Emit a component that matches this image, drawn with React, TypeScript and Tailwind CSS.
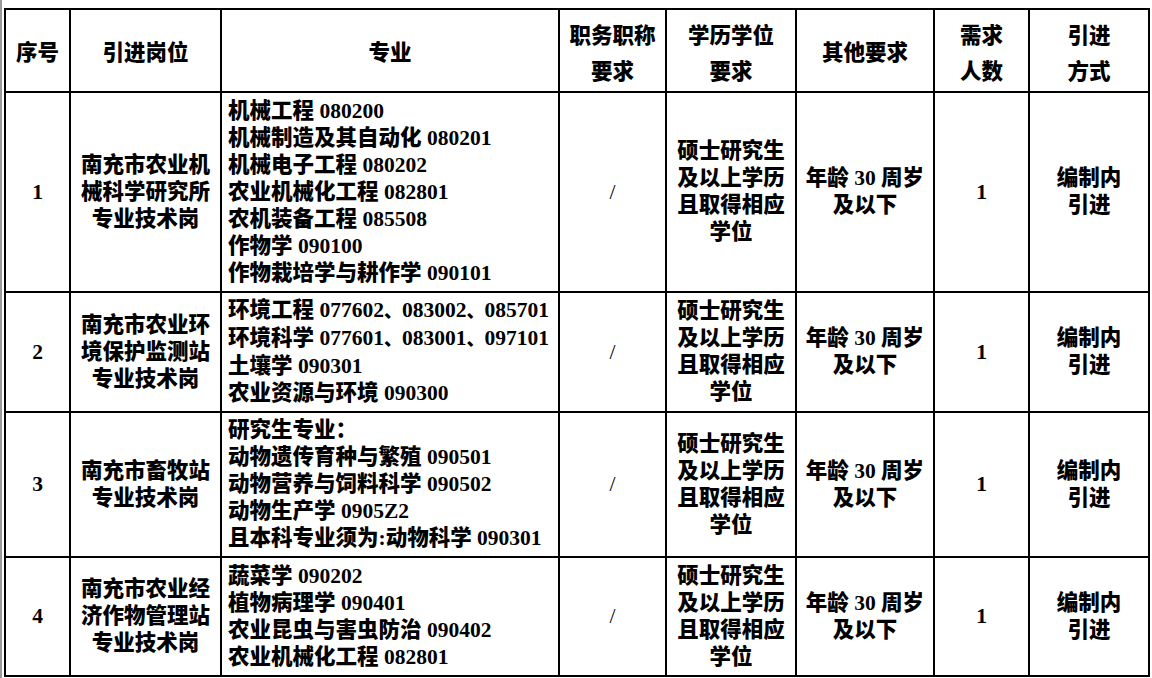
import React from "react";

type Row = {
  no: string;
  post: string[];
  majors: string[];
  title: string;
  edu: string[];
  other: string[];
  count: string;
  way: string[];
};

const rows: Row[] = [
  {
    no: "1",
    post: ["南充市农业机", "械科学研究所", "专业技术岗"],
    majors: [
      "机械工程 080200",
      "机械制造及其自动化 080201",
      "机械电子工程 080202",
      "农业机械化工程 082801",
      "农机装备工程 085508",
      "作物学 090100",
      "作物栽培学与耕作学 090101",
    ],
    title: "/",
    edu: ["硕士研究生", "及以上学历", "且取得相应", "学位"],
    other: ["年龄 30 周岁", "及以下"],
    count: "1",
    way: ["编制内", "引进"],
  },
  {
    no: "2",
    post: ["南充市农业环", "境保护监测站", "专业技术岗"],
    majors: [
      "环境工程 077602、083002、085701",
      "环境科学 077601、083001、097101",
      "土壤学 090301",
      "农业资源与环境 090300",
    ],
    title: "/",
    edu: ["硕士研究生", "及以上学历", "且取得相应", "学位"],
    other: ["年龄 30 周岁", "及以下"],
    count: "1",
    way: ["编制内", "引进"],
  },
  {
    no: "3",
    post: ["南充市畜牧站", "专业技术岗"],
    majors: [
      "研究生专业：",
      "动物遗传育种与繁殖 090501",
      "动物营养与饲料科学 090502",
      "动物生产学 0905Z2",
      "且本科专业须为:动物科学 090301",
    ],
    title: "/",
    edu: ["硕士研究生", "及以上学历", "且取得相应", "学位"],
    other: ["年龄 30 周岁", "及以下"],
    count: "1",
    way: ["编制内", "引进"],
  },
  {
    no: "4",
    post: ["南充市农业经", "济作物管理站", "专业技术岗"],
    majors: [
      "蔬菜学 090202",
      "植物病理学 090401",
      "农业昆虫与害虫防治 090402",
      "农业机械化工程 082801",
    ],
    title: "/",
    edu: ["硕士研究生", "及以上学历", "且取得相应", "学位"],
    other: ["年龄 30 周岁", "及以下"],
    count: "1",
    way: ["编制内", "引进"],
  },
];

function Cell({
  children,
  left,
  className = "",
}: {
  children: React.ReactNode;
  left?: boolean;
  className?: string;
}) {
  return (
    <div
      className={`border-r-2 border-b-2 border-black flex flex-col justify-center ${
        left ? "items-start pl-[6px]" : "items-center text-center"
      } ${className}`}
    >
      {children}
    </div>
  );
}

// the 、 in the source is set narrower than a full em
function Line({ text }: { text: string }) {
  const parts = text.split("、");
  return (
    <div className="whitespace-pre">
      {parts.map((p, i) => (
        <React.Fragment key={i}>
          {p}
          {i < parts.length - 1 && <span className="text-[18px]">、</span>}
        </React.Fragment>
      ))}
    </div>
  );
}

function Lines({ lines }: { lines: string[] }) {
  return (
    <>
      {lines.map((l, i) => (
        <Line key={i} text={l} />
      ))}
    </>
  );
}

export default function App() {
  return (
    <div className="w-[1152px] h-[678px] bg-white flex gap-[2px] overflow-hidden font-['Liberation_Serif','Noto_Sans_CJK_SC',serif] text-black font-black">
      {/* left edge of the scanned page */}
      <div className="w-[2px] bg-[#9a9a9a]" />

      <div className="mt-[8px] self-start border-l-2 border-t-2 border-black grid grid-cols-[65px_151px_338px_107px_130px_138px_95px_120px] grid-rows-[83px_200px_120px_145px_119px] text-[21.5px] leading-[27px]">
        {/* Header */}
        <Cell className="pt-[6px]">序号</Cell>
        <Cell className="pt-[6px]">引进岗位</Cell>
        <Cell className="pt-[6px]">专业</Cell>
        <Cell className="pt-[6px] leading-[36px]">
          <Lines lines={["职务职称", "要求"]} />
        </Cell>
        <Cell className="pt-[6px] leading-[36px]">
          <Lines lines={["学历学位", "要求"]} />
        </Cell>
        <Cell className="pt-[6px]">其他要求</Cell>
        <Cell className="pt-[6px] leading-[36px]">
          <Lines lines={["需求", "人数"]} />
        </Cell>
        <Cell className="pt-[6px] leading-[36px]">
          <Lines lines={["引进", "方式"]} />
        </Cell>

        {rows.map((r) => (
          <React.Fragment key={r.no}>
            <Cell>{r.no}</Cell>
            <Cell>
              <Lines lines={r.post} />
            </Cell>
            <Cell left>
              <Lines lines={r.majors} />
            </Cell>
            <Cell className="font-normal">{r.title}</Cell>
            <Cell>
              <Lines lines={r.edu} />
            </Cell>
            <Cell>
              <Lines lines={r.other} />
            </Cell>
            <Cell>{r.count}</Cell>
            <Cell>
              <Lines lines={r.way} />
            </Cell>
          </React.Fragment>
        ))}
      </div>
    </div>
  );
}
